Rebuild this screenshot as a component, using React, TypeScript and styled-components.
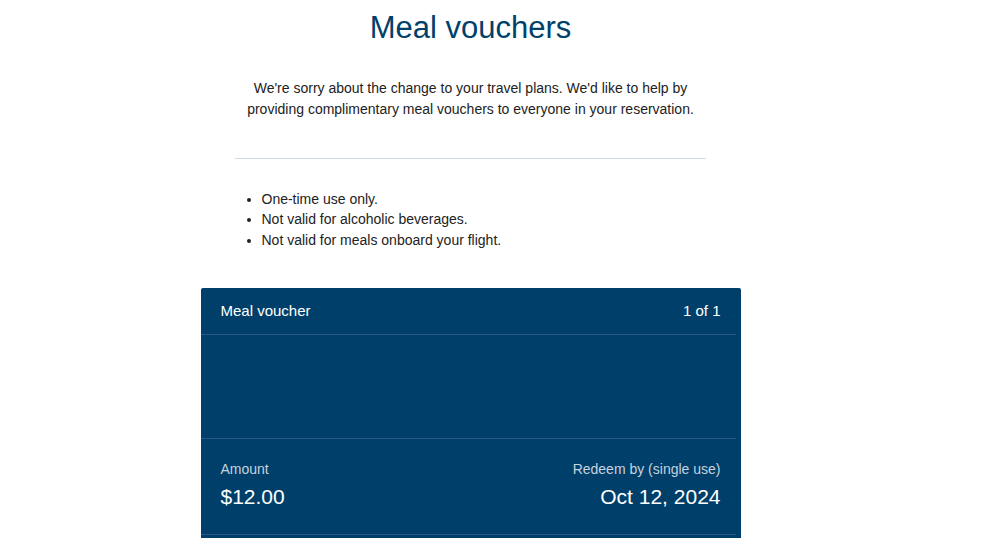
import React from "react";
import styled, { createGlobalStyle } from "styled-components";

const Global = createGlobalStyle`
  html, body { margin: 0; padding: 0; background: #ffffff; }
  body { font-family: "Liberation Sans", Arial, Helvetica, sans-serif; color: #222; }
  * { box-sizing: border-box; }
`;

const Page = styled.main`
  width: 941px;
  display: flex;
  flex-direction: column;
  align-items: center;
  padding-top: 10px;
`;

const Title = styled.h1`
  margin: 0;
  font-size: 31px;
  font-weight: 400;
  line-height: 36px;
  color: #00416b;
`;

const Intro = styled.p`
  margin: 32px 0 0;
  width: 471px;
  text-align: center;
  font-size: 14px;
  line-height: 21px;
  color: #222;
`;

const Rule = styled.hr`
  width: 471px;
  margin: 38px 0 0;
  border: 0;
  border-top: 1px solid #cddbe7;
`;

const Rules = styled.ul`
  margin: 30px 0 0;
  padding: 0 0 0 61px;
  width: 540px;
  font-size: 14px;
  line-height: 20.3px;
  color: #222;
`;

const Card = styled.section`
  margin-top: 38px;
  width: 540px;
  background: #003f6a;
  color: #ffffff;
  border-radius: 2px 2px 0 0;
`;

const CardRow = styled.div<{ $tall?: boolean }>`
  display: flex;
  justify-content: space-between;
  align-items: ${(p) => (p.$tall ? "flex-start" : "center")};
  padding: ${(p) => (p.$tall ? "21px 20px 0" : "0 20px")};
  height: ${(p) => (p.$tall ? "96px" : "47px")};
  margin-right: 5px;
  border-bottom: 1px solid #2a5889;
  font-size: 15px;
`;

const CardBody = styled.div`
  height: 104px;
  margin-right: 5px;
  border-bottom: 1px solid #2a5889;
`;

const Field = styled.div<{ $right?: boolean }>`
  display: flex;
  flex-direction: column;
  align-items: ${(p) => (p.$right ? "flex-end" : "flex-start")};
  gap: 7px;
  margin-right: ${(p) => (p.$right ? "-5px" : "0")};
`;

const Label = styled.span`
  font-size: 14px;
  line-height: 18px;
  color: #c6d2de;
`;

const Value = styled.span`
  font-size: 21px;
  line-height: 24px;
  color: #ffffff;
`;

const HeaderText = styled.span<{ $right?: boolean }>`
  margin-right: ${(p) => (p.$right ? "-5px" : "0")};
`;

export default function App() {
  return (
    <>
      <Global />
      <Page>
        <Title>Meal vouchers</Title>
        <Intro>
          We're sorry about the change to your travel plans. We'd like to help by providing
          complimentary meal vouchers to everyone in your reservation.
        </Intro>
        <Rule />
        <Rules>
          <li>One-time use only.</li>
          <li>Not valid for alcoholic beverages.</li>
          <li>Not valid for meals onboard your flight.</li>
        </Rules>
        <Card>
          <CardRow>
            <HeaderText>Meal voucher</HeaderText>
            <HeaderText $right>1 of 1</HeaderText>
          </CardRow>
          <CardBody />
          <CardRow $tall>
            <Field>
              <Label>Amount</Label>
              <Value>$12.00</Value>
            </Field>
            <Field $right>
              <Label>Redeem by (single use)</Label>
              <Value>Oct 12, 2024</Value>
            </Field>
          </CardRow>
          <CardBody />
        </Card>
      </Page>
    </>
  );
}
